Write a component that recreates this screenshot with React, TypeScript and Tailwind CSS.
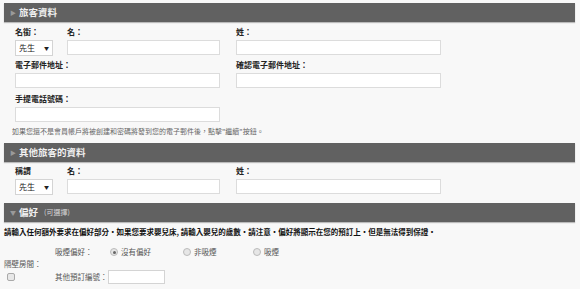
import React from "react"

const font = { fontFamily: '"Noto Sans CJK TC", "Liberation Sans", sans-serif' }

function Bar({ title, open, note }: { title: string; open?: boolean; note?: string }) {
  return (
    <div className="flex h-[19px] items-center bg-[#616161] pl-[6px] shadow-[0_1px_1px_#bbb]">
      <span className="mr-[3px] text-[6px] text-[#9a9a9a]">{open ? "▼" : "▶"}</span>
      <span className="text-[9.5px] font-bold text-[#f0f0f0]">{title}</span>
      {note && <span className="ml-[6px] text-[7px] text-[#d8d8d8]">{note}</span>}
    </div>
  )
}

function Field({ w }: { w: string }) {
  return <div className={`h-[15px] ${w} border border-[#dcdcdc] bg-white`} />
}

function Title() {
  return (
    <div className="flex h-[16px] w-[38px] items-center justify-between border border-[#d4d4d4] bg-white px-[3px]">
      <span className="text-[8px] text-[#222]">先生</span>
      <span className="text-[5px] text-[#222]">▼</span>
    </div>
  )
}

function Radio({ on, label, w }: { on?: boolean; label: string; w: string }) {
  return (
    <div className={`flex items-center ${w}`}>
      <span className="flex h-[8px] w-[8px] items-center justify-center rounded-full border border-[#bbb] bg-[#e6e6e6]">
        {on && <span className="h-[3px] w-[3px] rounded-full bg-[#666]" />}
      </span>
      <span className="ml-[3px] text-[7.5px] text-[#555]">{label}</span>
    </div>
  )
}

export default function App() {
  return (
    <div className="h-[289px] w-[580px] overflow-hidden bg-[#f8f8f8] pl-[4px] pr-[5px] pt-[3px]" style={font}>
      <Bar title="旅客資料" />

      <div className="pl-[11px]">
        <div className="mt-[4px] flex h-[12px] items-center text-[8px] font-bold text-[#222]">
          <span className="w-[52px]">名銜：</span>
          <span className="w-[169px]">名：</span>
          <span>姓：</span>
        </div>
        <div className="mt-[2px] flex items-start">
          <Title />
          <div className="ml-[14px]"><Field w="w-[153px]" /></div>
          <div className="ml-[16px]"><Field w="w-[205px]" /></div>
        </div>

        <div className="mt-[3px] flex h-[12px] items-center text-[8px] font-bold text-[#222]">
          <span className="w-[221px]">電子郵件地址：</span>
          <span>確認電子郵件地址：</span>
        </div>
        <div className="mt-[2px] flex">
          <Field w="w-[205px]" />
          <div className="ml-[16px]"><Field w="w-[205px]" /></div>
        </div>

        <div className="mt-[5px] flex h-[12px] items-center text-[8px] font-bold text-[#222]">
          <span>手提電話號碼：</span>
        </div>
        <div className="mt-[2px]">
          <Field w="w-[205px]" />
        </div>
      </div>

      <div className="mt-[3px] flex h-[12px] items-center pl-[8px] text-[7px] text-[#666]">
        如果您還不是會員帳戶將被創建和密碼將發到您的電子郵件後，點擊"繼續"按鈕。
      </div>

      <div className="mt-[6px]">
        <Bar title="其他旅客的資料" />
      </div>

      <div className="pl-[11px]">
        <div className="mt-[3px] flex h-[12px] items-center text-[8px] font-bold text-[#222]">
          <span className="w-[52px]">稱謂</span>
          <span className="w-[169px]">名：</span>
          <span>姓：</span>
        </div>
        <div className="mt-[2px] flex items-start">
          <div className="w-[35px]"><Title /></div>
          <div className="ml-[17px]"><Field w="w-[153px]" /></div>
          <div className="ml-[16px]"><Field w="w-[205px]" /></div>
        </div>
      </div>

      <div className="mt-[8px]">
        <Bar title="偏好" open note="(可選擇)" />
      </div>

      <div className="mt-[4px] flex h-[12px] items-center text-[7.5px] font-bold text-[#111]">
        請輸入任何額外要求在偏好部分・如果您要求嬰兒床, 請輸入嬰兒的歲數・請注意・偏好將顯示在您的預訂上・但是無法得到保證・
      </div>

      <div className="mt-[8px] flex h-[12px] items-center pl-[51px]">
        <span className="w-[55px] text-[7.5px] text-[#555]">吸煙偏好：</span>
        <Radio on label="沒有偏好" w="w-[73px]" />
        <Radio label="非吸煙" w="w-[70px]" />
        <Radio label="吸煙" w="" />
      </div>

      <div className="flex h-[12px] items-center text-[7.5px] text-[#555]">隔壁房間：</div>
      <div className="flex items-center">
        <span className="ml-[3px] h-[8px] w-[8px] rounded-[2px] border border-[#aaa] bg-[#e8e8e8]" />
        <span className="ml-[40px] w-[53px] text-[7.5px] text-[#555]">其他預訂編號：</span>
        <div className="h-[14px] w-[57px] border border-[#d4d4d4] bg-white" />
      </div>
    </div>
  )
}
